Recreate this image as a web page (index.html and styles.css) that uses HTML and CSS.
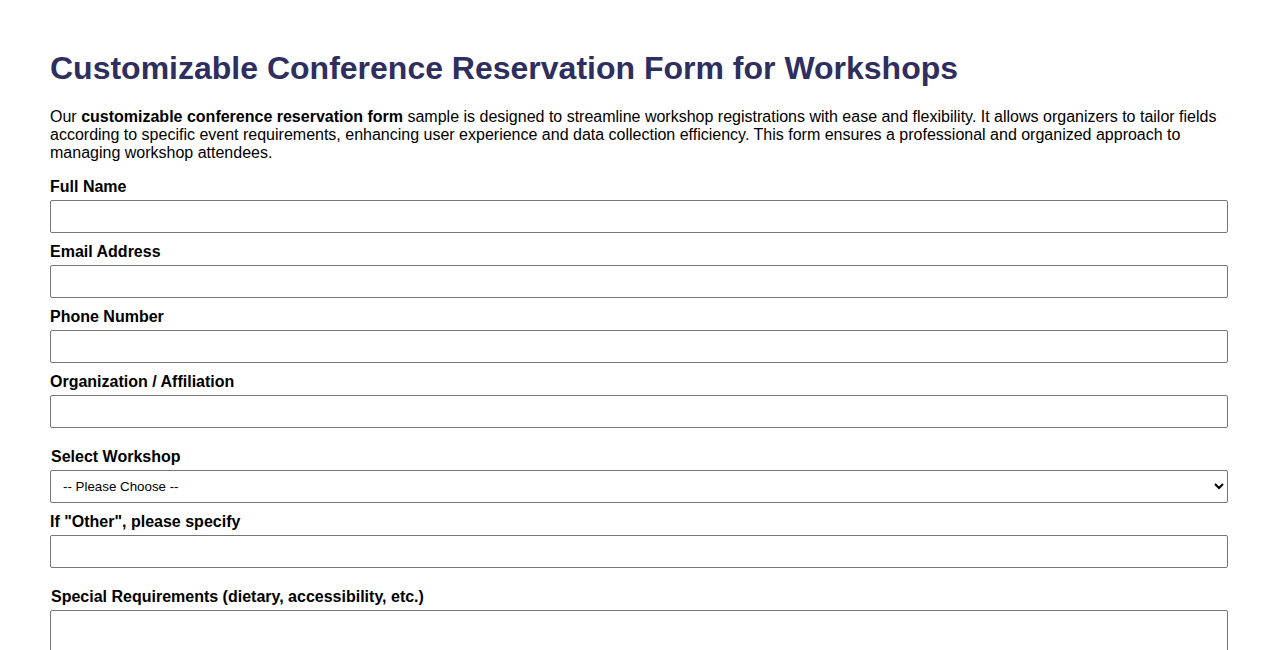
FILE: index.html
```html
<!DOCTYPE html>
<html lang="en">
<head>
<meta charset="utf-8">
<title>Customizable Conference Reservation Form for Workshops</title>
<link rel="stylesheet" href="styles.css">
</head>
<body>
<div class="page">
  <h1 class="title">Customizable Conference Reservation Form for Workshops</h1>
  <p class="intro">Our <strong>customizable conference reservation form</strong> sample is designed to streamline workshop registrations with ease and flexibility. It allows organizers to tailor fields according to specific event requirements, enhancing user experience and data collection efficiency. This form ensures a professional and organized approach to managing workshop attendees.</p>
  <form class="form">
    <label class="label" for="name">Full Name</label>
    <input class="field" type="text" id="name">
    <label class="label" for="email">Email Address</label>
    <input class="field" type="email" id="email">
    <label class="label" for="phone">Phone Number</label>
    <input class="field" type="tel" id="phone">
    <label class="label" for="org">Organization / Affiliation</label>
    <input class="field" type="text" id="org">
    <label class="label label-spaced" for="workshop">Select Workshop</label>
    <select class="field select" id="workshop">
      <option>-- Please Choose --</option>
    </select>
    <label class="label" for="other">If "Other", please specify</label>
    <input class="field" type="text" id="other">
    <label class="label label-spaced" for="req">Special Requirements (dietary, accessibility, etc.)</label>
    <textarea class="field area" id="req"></textarea>
  </form>
</div>
</body>
</html>
```
FILE: styles.css
```css
html, body {
  margin: 0;
  padding: 0;
  background: #ffffff;
}
body {
  font-family: "Liberation Sans", Arial, sans-serif;
  color: #000000;
}
.page {
  padding: 29px 50px 40px;
}
.title {
  font-size: 32px;
  font-weight: bold;
  color: #2e2e5f;
  margin: 21px 0 21px;
  line-height: 37px;
}
.intro {
  font-size: 16px;
  line-height: 18px;
  margin: 0 0 16px;
}
.form {
  display: block;
}
.label {
  display: block;
  font-size: 16px;
  font-weight: bold;
  line-height: 18px;
  margin-bottom: 4px;
}
.label-spaced {
  margin-top: 20px;
  padding-left: 1px;
}
.field {
  display: block;
  box-sizing: border-box;
  width: 100%;
  height: 33px;
  padding: 8px;
  margin: 0 0 10px;
  border: 1px solid #767676;
  border-radius: 2px;
  font-family: "Liberation Sans", Arial, sans-serif;
  font-size: 13.333px;
  background: #ffffff;
}
.select {
  padding: 0 8px;
  color: #000000;
}
.area {
  height: 90px;
  resize: vertical;
}
```
